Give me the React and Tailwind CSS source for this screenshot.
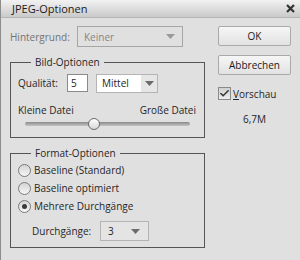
import { Check } from "lucide-react";

const font = { fontFamily: '"Open Sans", "Noto Sans", sans-serif' };

const Arrow = ({ color = "#6b6b6b" }) => (
  <svg width="9" height="5" viewBox="0 0 9 5">
    <path d="M0 0h9L4.5 5z" fill={color} />
  </svg>
);

const Radio = ({ checked, label }) => (
  <div className="flex h-[18px] items-center">
    <span className="flex h-[13px] w-[13px] items-center justify-center rounded-full border border-[#7a7a7a] bg-gradient-to-b from-[#d4d4d4] to-[#f6f6f6]">
      {checked && <span className="h-[5px] w-[5px] rounded-full bg-[#3a3a3a]" />}
    </span>
    <span className="ml-[3px]">{label}</span>
  </div>
);

export default function App() {
  return (
    <div
      style={font}
      className="flex h-[260px] w-[300px] flex-col border-l border-[#8c8c8c] bg-[#e0e0e0] text-[10px] leading-[14px] text-[#262626]"
    >
      {/* title bar */}
      <div className="flex h-[18px] shrink-0 items-center justify-between border-b border-[#b4b4b4] bg-gradient-to-b from-[#f2f2f2] to-[#cacaca] pl-[11px] pr-[5px]">
        <span className="text-[11px] text-[#1a1a1a]">JPEG-Optionen</span>
        <svg width="9" height="9" viewBox="0 0 9 9">
          <path d="M1 1l7 7M8 1L1 8" stroke="#333" strokeWidth="2.2" />
        </svg>
      </div>

      <div className="flex pt-[8px]">
        {/* left column */}
        <div className="w-[204px] shrink-0 pl-[9px]">
          <div className="flex h-[21px] items-center">
            <span className="w-[67px] text-[#747474]">Hintergrund:</span>
            <div className="flex h-[21px] w-[106px] items-center justify-between border border-[#a6a6a6] bg-[#e0e0e0] pl-[6px] pr-[7px] text-[#858585]">
              <span>Keiner</span>
              <Arrow color="#9a9a9a" />
            </div>
          </div>

          <fieldset className="mt-[8px] w-[195px] border border-[#555] px-[7px] pb-[7px]">
            <legend className="ml-[13px] px-[4px]">Bild-Optionen</legend>
            <div className="mt-[5px] flex h-[18px] items-center">
              <span className="w-[49px]">Qualität:</span>
              <div className="flex h-[18px] w-[21px] items-center border border-[#8a8a8a] bg-white pl-[3px]">5</div>
              <div className="ml-[8px] flex h-[19px] w-[62px] border border-[#b4b4b4] bg-[#e6e6e6]">
                <span className="flex flex-1 items-center bg-white pl-[5px]">Mittel</span>
                <span className="flex w-[16px] items-center justify-center">
                  <Arrow />
                </span>
              </div>
            </div>
            <div className="mt-[11px] flex justify-between pr-px">
              <span>Kleine Datei</span>
              <span>Große Datei</span>
            </div>
            <div className="relative mx-[7px] mt-px flex h-[12px] items-center">
              <div className="h-[4px] w-full rounded-full bg-gradient-to-b from-[#8a8a8a] to-[#c4c4c4]" />
              <span className="absolute left-[63px] top-0 h-[12px] w-[12px] rounded-full border border-[#6a6a6a] bg-gradient-to-b from-[#ffffff] to-[#d8d8d8]" />
            </div>
          </fieldset>

          <fieldset className="mt-[8px] w-[195px] border border-[#555] px-[7px] pb-[6px]">
            <legend className="ml-[13px] px-[4px]">Format-Optionen</legend>
            <div className="mt-px">
              <Radio label="Baseline (Standard)" />
              <Radio label="Baseline optimiert" />
              <Radio checked label="Mehrere Durchgänge" />
            </div>
            <div className="mt-[6px] flex h-[20px] items-center pl-[14px]">
              <span className="w-[68px]">Durchgänge:</span>
              <div className="flex h-[20px] w-[49px] items-center justify-between border border-[#b4b4b4] bg-[#e4e4e4] pl-[7px] pr-[8px]">
                <span>3</span>
                <Arrow />
              </div>
            </div>
          </fieldset>
        </div>

        {/* right column */}
        <div className="ml-[13px] flex w-[73px] flex-col">
          <button className="h-[20px] rounded-[2px] border border-[#a9a9a9] bg-gradient-to-b from-[#f6f6f6] to-[#e2e2e2] text-[#1a1a1a]">
            OK
          </button>
          <button className="mt-[9px] h-[20px] rounded-[2px] border border-[#a9a9a9] bg-gradient-to-b from-[#f6f6f6] to-[#e2e2e2] text-[#1a1a1a]">
            Abbrechen
          </button>
          <div className="mt-[12px] flex h-[13px] items-center">
            <span className="flex h-[13px] w-[13px] items-center justify-center border border-[#8a8a8a] bg-gradient-to-b from-[#d0d0d0] to-[#eeeeee]">
              <Check size={11} strokeWidth={3.5} color="#3a3a3a" />
            </span>
            <span className="ml-[2px]">
              <span className="underline">V</span>orschau
            </span>
          </div>
          <div className="mt-[12px] text-center">6,7M</div>
        </div>
      </div>
    </div>
  );
}
